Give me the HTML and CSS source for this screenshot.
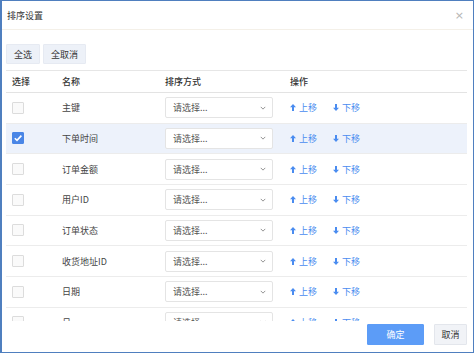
FILE: index.html
```html
<!DOCTYPE html>
<html lang="zh">
<head>
<meta charset="utf-8">
<link rel="stylesheet" href="styles.css">
</head>
<body>
<div class="dialog">
  <div class="titlebar">
    <span class="title">排序设置</span>
    <span class="close">×</span>
  </div>
  <div class="toolbar">
    <button class="tbtn">全选</button>
    <button class="tbtn">全取消</button>
  </div>
  <div class="list">
    <div class="row head">
      <div class="c1">选择</div><div class="c2">名称</div><div class="c3">排序方式</div><div class="c4">操作</div>
    </div>
    <div class="row"><div class="c1"><span class="cb"></span></div><div class="c2">主键</div><div class="c3"><div class="sel"><span>请选择...</span><svg class="chev" viewBox="0 0 8 5" width="6" height="4"><path d="M1 1 L4 4 L7 1" fill="none" stroke="#888" stroke-width="1.2"/></svg></div></div><div class="c4"><span class="act"><svg class="arr" viewBox="0 0 6 7" width="6" height="7"><path d="M3 0 L6 3.2 L4 3.2 L4 7 L2 7 L2 3.2 L0 3.2 Z" fill="#4a8cf0"/></svg>上移</span><span class="act"><svg class="arr" viewBox="0 0 6 7" width="6" height="7"><path d="M3 7 L6 3.8 L4 3.8 L4 0 L2 0 L2 3.8 L0 3.8 Z" fill="#4a8cf0"/></svg>下移</span></div></div>
    <div class="row sel-row"><div class="c1"><span class="cb on"><svg viewBox="0 0 12 12" width="12" height="12"><path d="M2.8 6.2 L5 8.4 L9.4 3.6" fill="none" stroke="#fff" stroke-width="1.6"/></svg></span></div><div class="c2">下单时间</div><div class="c3"><div class="sel"><span>请选择...</span><svg class="chev" viewBox="0 0 8 5" width="6" height="4"><path d="M1 1 L4 4 L7 1" fill="none" stroke="#888" stroke-width="1.2"/></svg></div></div><div class="c4"><span class="act"><svg class="arr" viewBox="0 0 6 7" width="6" height="7"><path d="M3 0 L6 3.2 L4 3.2 L4 7 L2 7 L2 3.2 L0 3.2 Z" fill="#4a8cf0"/></svg>上移</span><span class="act"><svg class="arr" viewBox="0 0 6 7" width="6" height="7"><path d="M3 7 L6 3.8 L4 3.8 L4 0 L2 0 L2 3.8 L0 3.8 Z" fill="#4a8cf0"/></svg>下移</span></div></div>
    <div class="row"><div class="c1"><span class="cb"></span></div><div class="c2">订单金额</div><div class="c3"><div class="sel"><span>请选择...</span><svg class="chev" viewBox="0 0 8 5" width="6" height="4"><path d="M1 1 L4 4 L7 1" fill="none" stroke="#888" stroke-width="1.2"/></svg></div></div><div class="c4"><span class="act"><svg class="arr" viewBox="0 0 6 7" width="6" height="7"><path d="M3 0 L6 3.2 L4 3.2 L4 7 L2 7 L2 3.2 L0 3.2 Z" fill="#4a8cf0"/></svg>上移</span><span class="act"><svg class="arr" viewBox="0 0 6 7" width="6" height="7"><path d="M3 7 L6 3.8 L4 3.8 L4 0 L2 0 L2 3.8 L0 3.8 Z" fill="#4a8cf0"/></svg>下移</span></div></div>
    <div class="row"><div class="c1"><span class="cb"></span></div><div class="c2">用户ID</div><div class="c3"><div class="sel"><span>请选择...</span><svg class="chev" viewBox="0 0 8 5" width="6" height="4"><path d="M1 1 L4 4 L7 1" fill="none" stroke="#888" stroke-width="1.2"/></svg></div></div><div class="c4"><span class="act"><svg class="arr" viewBox="0 0 6 7" width="6" height="7"><path d="M3 0 L6 3.2 L4 3.2 L4 7 L2 7 L2 3.2 L0 3.2 Z" fill="#4a8cf0"/></svg>上移</span><span class="act"><svg class="arr" viewBox="0 0 6 7" width="6" height="7"><path d="M3 7 L6 3.8 L4 3.8 L4 0 L2 0 L2 3.8 L0 3.8 Z" fill="#4a8cf0"/></svg>下移</span></div></div>
    <div class="row"><div class="c1"><span class="cb"></span></div><div class="c2">订单状态</div><div class="c3"><div class="sel"><span>请选择...</span><svg class="chev" viewBox="0 0 8 5" width="6" height="4"><path d="M1 1 L4 4 L7 1" fill="none" stroke="#888" stroke-width="1.2"/></svg></div></div><div class="c4"><span class="act"><svg class="arr" viewBox="0 0 6 7" width="6" height="7"><path d="M3 0 L6 3.2 L4 3.2 L4 7 L2 7 L2 3.2 L0 3.2 Z" fill="#4a8cf0"/></svg>上移</span><span class="act"><svg class="arr" viewBox="0 0 6 7" width="6" height="7"><path d="M3 7 L6 3.8 L4 3.8 L4 0 L2 0 L2 3.8 L0 3.8 Z" fill="#4a8cf0"/></svg>下移</span></div></div>
    <div class="row"><div class="c1"><span class="cb"></span></div><div class="c2">收货地址ID</div><div class="c3"><div class="sel"><span>请选择...</span><svg class="chev" viewBox="0 0 8 5" width="6" height="4"><path d="M1 1 L4 4 L7 1" fill="none" stroke="#888" stroke-width="1.2"/></svg></div></div><div class="c4"><span class="act"><svg class="arr" viewBox="0 0 6 7" width="6" height="7"><path d="M3 0 L6 3.2 L4 3.2 L4 7 L2 7 L2 3.2 L0 3.2 Z" fill="#4a8cf0"/></svg>上移</span><span class="act"><svg class="arr" viewBox="0 0 6 7" width="6" height="7"><path d="M3 7 L6 3.8 L4 3.8 L4 0 L2 0 L2 3.8 L0 3.8 Z" fill="#4a8cf0"/></svg>下移</span></div></div>
    <div class="row"><div class="c1"><span class="cb"></span></div><div class="c2">日期</div><div class="c3"><div class="sel"><span>请选择...</span><svg class="chev" viewBox="0 0 8 5" width="6" height="4"><path d="M1 1 L4 4 L7 1" fill="none" stroke="#888" stroke-width="1.2"/></svg></div></div><div class="c4"><span class="act"><svg class="arr" viewBox="0 0 6 7" width="6" height="7"><path d="M3 0 L6 3.2 L4 3.2 L4 7 L2 7 L2 3.2 L0 3.2 Z" fill="#4a8cf0"/></svg>上移</span><span class="act"><svg class="arr" viewBox="0 0 6 7" width="6" height="7"><path d="M3 7 L6 3.8 L4 3.8 L4 0 L2 0 L2 3.8 L0 3.8 Z" fill="#4a8cf0"/></svg>下移</span></div></div>
    <div class="row"><div class="c1"><span class="cb"></span></div><div class="c2">月</div><div class="c3"><div class="sel"><span>请选择...</span><svg class="chev" viewBox="0 0 8 5" width="6" height="4"><path d="M1 1 L4 4 L7 1" fill="none" stroke="#888" stroke-width="1.2"/></svg></div></div><div class="c4"><span class="act"><svg class="arr" viewBox="0 0 6 7" width="6" height="7"><path d="M3 0 L6 3.2 L4 3.2 L4 7 L2 7 L2 3.2 L0 3.2 Z" fill="#4a8cf0"/></svg>上移</span><span class="act"><svg class="arr" viewBox="0 0 6 7" width="6" height="7"><path d="M3 7 L6 3.8 L4 3.8 L4 0 L2 0 L2 3.8 L0 3.8 Z" fill="#4a8cf0"/></svg>下移</span></div></div>
    <div class="row"><div class="c1"><span class="cb"></span></div><div class="c2">备注</div><div class="c3"><div class="sel"><span>请选择...</span><svg class="chev" viewBox="0 0 8 5" width="6" height="4"><path d="M1 1 L4 4 L7 1" fill="none" stroke="#888" stroke-width="1.2"/></svg></div></div><div class="c4"><span class="act"><svg class="arr" viewBox="0 0 6 7" width="6" height="7"><path d="M3 0 L6 3.2 L4 3.2 L4 7 L2 7 L2 3.2 L0 3.2 Z" fill="#4a8cf0"/></svg>上移</span><span class="act"><svg class="arr" viewBox="0 0 6 7" width="6" height="7"><path d="M3 7 L6 3.8 L4 3.8 L4 0 L2 0 L2 3.8 L0 3.8 Z" fill="#4a8cf0"/></svg>下移</span></div></div>
  </div>
  <div class="footer">
    <button class="btn primary">确定</button>
    <button class="btn plain">取消</button>
  </div>
</div>
</body>
</html>
```
FILE: styles.css
```css
html, body {
  margin: 0;
  padding: 0;
  background: #fff;
}
body {
  font-family: "Noto Sans CJK SC", "Noto Sans", sans-serif;
  font-size: 9px;
  color: #444;
}
.dialog {
  width: 474px;
  height: 353px;
  box-sizing: border-box;
  border: 1px solid #4f7fbf;
  border-left-width: 2px;
  background: #fff;
  display: flex;
  flex-direction: column;
}
.titlebar {
  height: 28px;
  flex: none;
  display: flex;
  align-items: center;
  justify-content: space-between;
  padding: 0 9px 0 5px;
  border-bottom: 1px solid #f4f0e8;
  background: #fff;
}
.title {
  font-size: 9px;
  color: #333;
}
.close {
  font-family: "DejaVu Sans", sans-serif;
  font-size: 11px;
  color: #b5b5b5;
}
.toolbar {
  display: flex;
  gap: 3px;
  padding: 14px 0 0 4px;
  flex: none;
}
.tbtn {
  height: 20px;
  padding: 0 7px;
  border: 1px solid #e6eaf2;
  background: #edf1f8;
  color: #333;
  font-family: inherit;
  font-size: 9px;
  border-radius: 1px;
}
.list {
  margin: 6px 6px 0 4px;
  height: 251px;
  overflow-y: scroll;
  flex: none;
}
.list::-webkit-scrollbar {
  width: 5px;
}
.list::-webkit-scrollbar-track {
  background: transparent;
}
.list::-webkit-scrollbar-thumb {
  background: #c9c9c9;
  border-left: 1px solid #fff;
  border-right: 1px solid #fff;
}
.row {
  display: grid;
  grid-template-columns: 50px 103px 118px 1fr;
  align-items: center;
  height: 30.67px;
  box-sizing: border-box;
  padding-left: 6px;
  border-bottom: 1px solid #ececec;
  color: #444;
}
.row.head {
  height: 23px;
  border-top: 1px solid #e6e6e6;
  border-bottom: 1px solid #e3e3e3;
  color: #333;
  font-weight: 500;
}
.row.sel-row {
  background: #edf2fb;
}
.cb {
  display: block;
  width: 12px;
  height: 12px;
  box-sizing: border-box;
  border: 1px solid #dcdcdc;
  background: #fafafa;
  border-radius: 1px;
}
.cb.on {
  background: #4a86e6;
  border-color: #4a86e6;
  position: relative;
}
.cb.on svg {
  position: absolute;
  left: -1px;
  top: -1px;
}
.sel {
  width: 108px;
  height: 21px;
  box-sizing: border-box;
  border: 1px solid #e4e4e4;
  border-radius: 2px;
  background: #fff;
  display: flex;
  align-items: center;
  justify-content: space-between;
  padding: 0 6px 0 7px;
  color: #555;
}
.c4 {
  display: flex;
  padding-left: 7px;
}
.act {
  display: inline-flex;
  align-items: center;
  gap: 3px;
  color: #4a8cf0;
  width: 43px;
}
.footer {
  display: flex;
  justify-content: flex-end;
  gap: 10px;
  padding: 3px 6px 0 0;
  flex: none;
}
.btn {
  height: 21px;
  font-family: inherit;
  font-size: 9px;
  border-radius: 1px;
}
.primary {
  width: 57px;
  background: #5c9cf7;
  border: 1px solid #5c9cf7;
  color: #fff;
}
.plain {
  width: 33px;
  background: #f1f3f7;
  border: 1px solid #e3e6ec;
  color: #333;
  padding: 0;
}
```
